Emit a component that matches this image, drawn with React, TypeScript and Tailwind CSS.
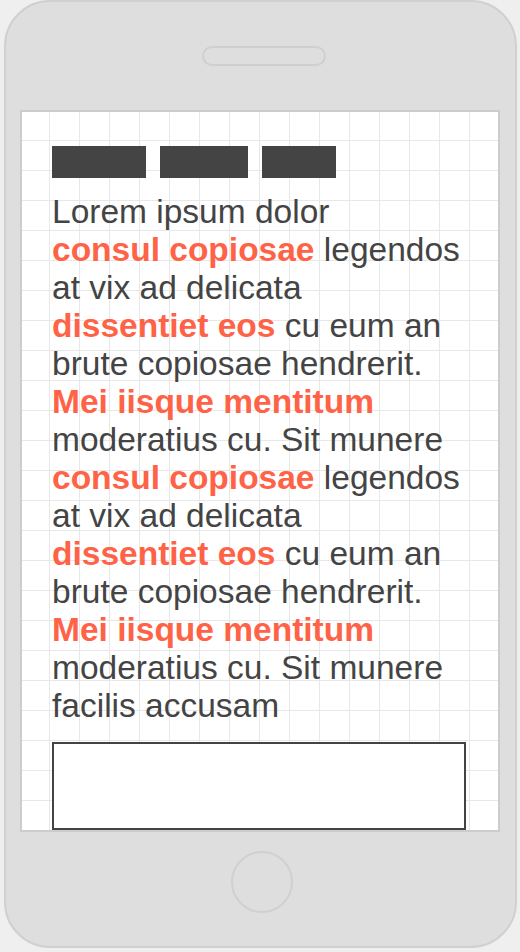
import React from "react";

const lines: Array<[string, string]> = [
  ["", "Lorem ipsum dolor"],
  ["consul copiosae", " legendos"],
  ["", "at vix ad delicata"],
  ["dissentiet eos", " cu eum an"],
  ["", "brute copiosae hendrerit."],
  ["Mei iisque mentitum", ""],
  ["", "moderatius cu. Sit munere"],
  ["consul copiosae", " legendos"],
  ["", "at vix ad delicata"],
  ["dissentiet eos", " cu eum an"],
  ["", "brute copiosae hendrerit."],
  ["Mei iisque mentitum", ""],
  ["", "moderatius cu. Sit munere"],
  ["", "facilis accusam"],
];

export default function App() {
  return (
    <div className="w-[520px] h-[952px] bg-[#efefef] overflow-hidden" style={{ fontFamily: '"Liberation Sans", Arial, sans-serif' }}>
      <div className="ml-[4px] w-[513px] h-[948px] rounded-[46px] bg-[#dedede] border-2 border-[#d0d0d0] flex flex-col items-start">
        <div className="mt-[44px] ml-[196px] w-[124px] h-[20px] rounded-full border-2 border-[#cfcfcf]" />
        <div className="mt-[44px] ml-[14px] w-[480px] h-[722px] border-2 border-[#cccccc] bg-white bg-[linear-gradient(to_right,#e8e8e8_1px,transparent_1px),linear-gradient(to_bottom,#e8e8e8_1px,transparent_1px)] bg-size-[30px_30px] bg-position-[27px_28px] pl-[30px] pt-[34px] flex flex-col items-start overflow-hidden">
          <div className="flex gap-[14px]">
            <div className="w-[94px] h-[32px] bg-[#444444]" />
            <div className="w-[88px] h-[32px] bg-[#444444]" />
            <div className="w-[74px] h-[32px] bg-[#444444]" />
          </div>
          <p className="mt-[15px] text-[33.5px] leading-[38px] text-[#444444] whitespace-nowrap">
            {lines.map(([b, t], i) => (
              <React.Fragment key={i}>
                {b && <span className="font-bold text-[#ff6347]">{b}</span>}
                {t}
                {i < lines.length - 1 && <br />}
              </React.Fragment>
            ))}
          </p>
          <div className="mt-[17px] w-[414px] h-[88px] shrink-0 border-2 border-[#444444] bg-white" />
        </div>
        <div className="mt-[19px] ml-[225px] w-[62px] h-[62px] rounded-full border-2 border-[#d0d0d0]" />
      </div>
    </div>
  );
}
